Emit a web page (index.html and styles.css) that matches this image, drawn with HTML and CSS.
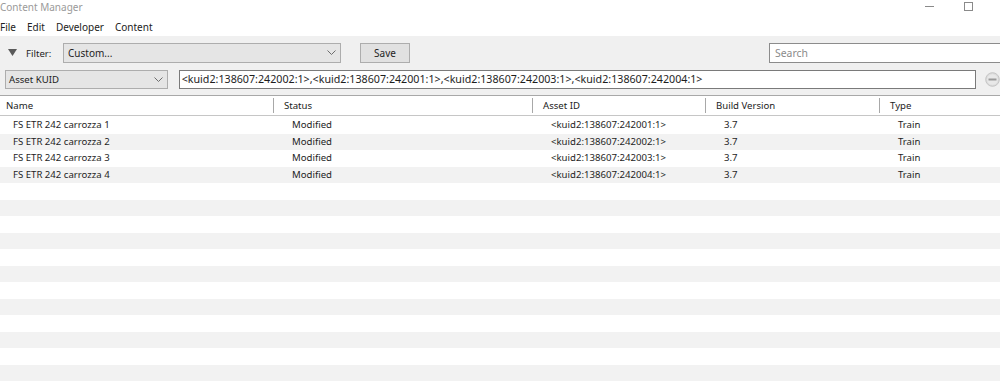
FILE: index.html
```html
<!DOCTYPE html>
<html lang="en">

<head>
    <meta charset="UTF-8">
    <meta name="viewport" content="width=device-width, initial-scale=1.0">
    <title>Content Manager</title>
    <link rel="stylesheet" href="styles.css">
</head>

<body>
    <div class="titlebar">
        <span class="title">Content Manager</span>
        <div class="window-buttons">
            <span class="btn-min"></span>
            <span class="btn-max"></span>
        </div>
    </div>

    <nav class="menubar">
        <span>File</span>
        <span>Edit</span>
        <span>Developer</span>
        <span>Content</span>
    </nav>

    <div class="toolbar">
        <div class="tool-row">
            <svg class="collapse" width="9" height="8" viewBox="0 0 9 8">
                <polygon points="0,0 9,0 4.5,7" fill="#5a5a5a" />
            </svg>
            <span class="filter-label">Filter:</span>
            <div class="combo filter-combo">
                <span>Custom...</span>
                <svg width="9" height="6" viewBox="0 0 9 6">
                    <polyline points="0.5,0.5 4.5,4.5 8.5,0.5" fill="none" stroke="#6d6d6d" />
                </svg>
            </div>
            <button class="button">Save</button>
            <input class="search" type="text" placeholder="Search">
        </div>
        <div class="tool-row second">
            <div class="combo field-combo">
                <span>Asset KUID</span>
                <svg width="9" height="6" viewBox="0 0 9 6">
                    <polyline points="0.5,0.5 4.5,4.5 8.5,0.5" fill="none" stroke="#6d6d6d" />
                </svg>
            </div>
            <div class="kuid-field">&lt;kuid2:138607:242002:1&gt;,&lt;kuid2:138607:242001:1&gt;,&lt;kuid2:138607:242003:1&gt;,&lt;kuid2:138607:242004:1&gt;</div>
            <svg class="remove" width="15" height="15" viewBox="0 0 15 15">
                <circle cx="7.5" cy="7.5" r="6.8" fill="#dcdcdc" stroke="#c4c4c4" />
                <circle cx="7.5" cy="7.5" r="5.3" fill="#e8e8e8" />
                <rect x="3.5" y="6.5" width="8" height="2" fill="#9a9a9a" />
            </svg>
        </div>
    </div>

    <div class="table">
        <div class="row head">
            <div class="th">Name</div>
            <div class="th">Status</div>
            <div class="th">Asset ID</div>
            <div class="th">Build Version</div>
            <div class="th">Type</div>
        </div>
        <div class="rows">
            <div class="row">
                <div class="td">FS ETR 242 carrozza 1</div>
                <div class="td">Modified</div>
                <div class="td">&lt;kuid2:138607:242001:1&gt;</div>
                <div class="td">3.7</div>
                <div class="td">Train</div>
            </div>
            <div class="row">
                <div class="td">FS ETR 242 carrozza 2</div>
                <div class="td">Modified</div>
                <div class="td">&lt;kuid2:138607:242002:1&gt;</div>
                <div class="td">3.7</div>
                <div class="td">Train</div>
            </div>
            <div class="row">
                <div class="td">FS ETR 242 carrozza 3</div>
                <div class="td">Modified</div>
                <div class="td">&lt;kuid2:138607:242003:1&gt;</div>
                <div class="td">3.7</div>
                <div class="td">Train</div>
            </div>
            <div class="row">
                <div class="td">FS ETR 242 carrozza 4</div>
                <div class="td">Modified</div>
                <div class="td">&lt;kuid2:138607:242004:1&gt;</div>
                <div class="td">3.7</div>
                <div class="td">Train</div>
            </div>
            <div class="row empty"></div>
            <div class="row empty"></div>
            <div class="row empty"></div>
            <div class="row empty"></div>
            <div class="row empty"></div>
            <div class="row empty"></div>
            <div class="row empty"></div>
            <div class="row empty"></div>
            <div class="row empty"></div>
            <div class="row empty"></div>
            <div class="row empty"></div>
            <div class="row empty"></div>
            <div class="row empty"></div>
        </div>
    </div>
</body>

</html>
```

FILE: styles.css
```css
body {
    font-family: "Noto Sans", "Open Sans", sans-serif;
    font-size: 9.6px;
    color: #1e1e1e;
    background-color: #fff;
    margin: 0;
    padding: 0;
    overflow: hidden;
}

.titlebar {
    height: 17px;
    display: flex;
    justify-content: space-between;
}

.title {
    font-size: 10px;
    line-height: 15px;
    color: #9a9a9a;
}

.window-buttons {
    display: flex;
    align-items: flex-start;
    gap: 30px;
    padding-right: 27px;
}

.btn-min {
    width: 9px;
    height: 1px;
    margin-top: 6px;
    background-color: #8a8a8a;
}

.btn-max {
    width: 7px;
    height: 7px;
    margin-top: 2px;
    border: 1px solid #8a8a8a;
}

.menubar {
    height: 19px;
    display: flex;
    align-items: center;
    gap: 11px;
    font-size: 10px;
    color: #222;
}

.toolbar {
    background-color: #f0f0f0;
    border-bottom: 1px solid #a8a8a8;
    padding: 7px 0 6px 0;
}

.tool-row {
    display: flex;
    align-items: center;
    height: 20px;
}

.tool-row.second {
    margin-top: 7px;
    height: 19px;
}

.collapse {
    margin-left: 8px;
}

.filter-label {
    margin-left: 9px;
    width: 37px;
}

.combo {
    box-sizing: border-box;
    height: 100%;
    display: flex;
    align-items: center;
    justify-content: space-between;
    background-color: #e5e5e5;
    border: 1px solid #adadad;
    padding: 0 4px 0 4px;
}

.filter-combo {
    width: 278px;
    font-size: 10px;
}

.field-combo {
    width: 163px;
    margin-left: 5px;
    padding-left: 3px;
}

.button {
    box-sizing: border-box;
    height: 20px;
    width: 50px;
    margin-left: 19px;
    font-family: inherit;
    font-size: 10px;
    color: #1e1e1e;
    background-color: #e1e1e1;
    border: 1px solid #adadad;
    padding: 0;
}

.search {
    box-sizing: border-box;
    height: 20px;
    margin-left: auto;
    width: 240px;
    margin-right: -9px;
    font-family: inherit;
    font-size: 10.4px;
    border: 1px solid #8c8c8c;
    padding: 0 5px;
    outline: none;
}

.search::placeholder {
    color: #8a8a8a;
}

.kuid-field {
    box-sizing: border-box;
    height: 100%;
    width: 799px;
    margin-left: 11px;
    background-color: #fff;
    border: 1px solid #7a7a7a;
    padding-left: 2px;
    font-size: 10.7px;
    line-height: 17px;
    white-space: nowrap;
    overflow: hidden;
}

.remove {
    margin-left: 9px;
}

.row {
    display: grid;
    grid-template-columns: 273px 259px 173px 174px 1fr;
    height: 16.5px;
    line-height: 16.5px;
    white-space: nowrap;
}

.row.head {
    height: 20px;
    line-height: 15px;
    border-bottom: 1px solid #c6c6c6;
    box-sizing: border-box;
}

.th {
    margin: 2px 0 2px 0;
    padding-left: 10px;
    border-left: 1px solid #a8a8a8;
    color: #222;
}

.th:first-child {
    padding-left: 6px;
    border-left: none;
}

.rows {
    padding-top: 1px;
}

.rows .row:nth-child(even) {
    background-color: #f2f2f2;
}

.td {
    padding-left: 19px;
}

.td:first-child {
    padding-left: 13px;
}
```
